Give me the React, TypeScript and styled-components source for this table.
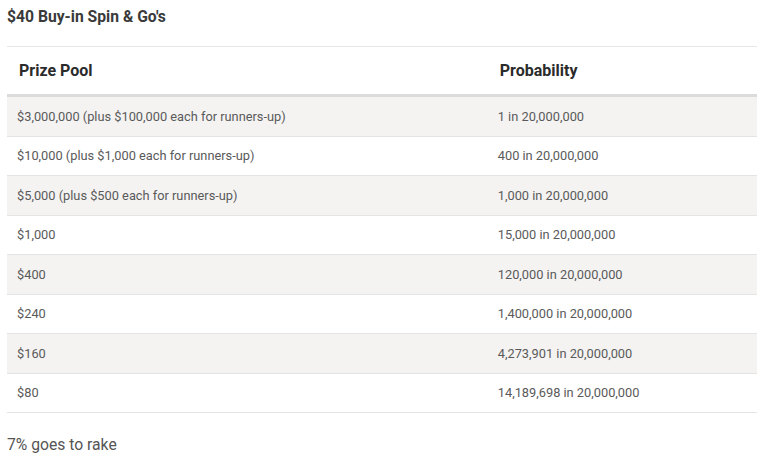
import React from "react";
import styled, { createGlobalStyle } from "styled-components";

interface Row {
  prize: string;
  odds: string;
}

const rows: Row[] = [
  { prize: "$3,000,000 (plus $100,000 each for runners-up)", odds: "1 in 20,000,000" },
  { prize: "$10,000 (plus $1,000 each for runners-up)", odds: "400 in 20,000,000" },
  { prize: "$5,000 (plus $500 each for runners-up)", odds: "1,000 in 20,000,000" },
  { prize: "$1,000", odds: "15,000 in 20,000,000" },
  { prize: "$400", odds: "120,000 in 20,000,000" },
  { prize: "$240", odds: "1,400,000 in 20,000,000" },
  { prize: "$160", odds: "4,273,901 in 20,000,000" },
  { prize: "$80", odds: "14,189,698 in 20,000,000" }
];

const GlobalStyle = createGlobalStyle`
  body {
    margin: 0;
    background: #fff;
    font-family: Roboto, "Liberation Sans", sans-serif;
  }
`;

export default function App() {
  return (
    <Wrapper>
      <GlobalStyle />
      <Heading>$40 Buy-in Spin &amp; Go's</Heading>
      <Table>
        <thead>
          <tr>
            <Th style={{ width: "64.1%" }}>Prize Pool</Th>
            <Th>Probability</Th>
          </tr>
        </thead>
        <tbody>
          {rows.map((row, i) => (
            <Tr key={row.prize} $striped={i % 2 === 0}>
              <Td>{row.prize}</Td>
              <Td>{row.odds}</Td>
            </Tr>
          ))}
        </tbody>
      </Table>
      <Note>7% goes to rake</Note>
    </Wrapper>
  );
}

const Wrapper = styled.div`
  width: 750px;
  padding: 7px 0 0 7px;
`;

const Heading = styled.h3`
  margin: 0 0 19px;
  font-size: 15.7px;
  line-height: 20px;
  font-weight: 700;
  color: #3a3a3a;
`;

const Table = styled.table`
  width: 100%;
  border-collapse: collapse;
  border-top: 1px solid #e6e6e6;
`;

const Th = styled.th`
  height: 47px;
  padding: 0 12px;
  text-align: left;
  font-size: 16px;
  font-weight: 700;
  color: #2b2b2b;
  border-bottom: 3px solid #dcdcdc;
`;

const Tr = styled.tr<{ $striped: boolean }>`
  background: ${(p) => (p.$striped ? "#f4f3f2" : "#fff")};
  border-bottom: 1px solid #e4e4e4;
`;

const Td = styled.td`
  height: 38.5px;
  padding: 0 10px;
  font-size: 12.8px;
  color: #5a5a5a;
`;

const Note = styled.p`
  margin: 22px 0 0;
  font-size: 15.7px;
  color: #555;
`;
